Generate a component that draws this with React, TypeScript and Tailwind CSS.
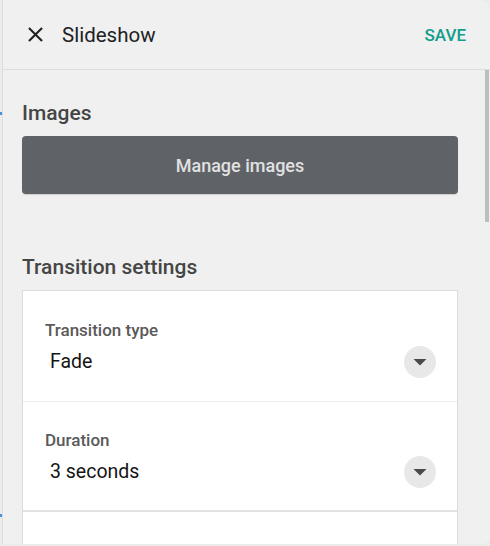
import React from "react";

function CloseIcon() {
  return (
    <svg width="25" height="25" viewBox="0 0 24 24" className="shrink-0 text-[#202124]">
      <path
        fill="currentColor"
        d="M19 6.41L17.59 5 12 10.59 6.41 5 5 6.41 10.59 12 5 17.59 6.41 19 12 13.41 17.59 19 19 17.59 13.41 12z"
      />
    </svg>
  );
}

function DropdownButton() {
  return (
    <div className="w-[32px] h-[32px] rounded-full bg-[#e8e8e8] flex items-center justify-center shrink-0">
      <svg width="14" height="8" viewBox="0 0 14 8">
        <path d="M0.5 1 L13.5 1 L7 7.5 Z" fill="#4a4a4a" />
      </svg>
    </div>
  );
}

function SelectRow({ label, value, last }: { label: string; value: string; last?: boolean }) {
  return (
    <div
      className={
        "pl-[22px] pr-[21px] " +
        (last ? "pt-[29px] pb-[22px] border-b-2 border-[#e2e2e2]" : "pt-[30px] pb-[23px] border-b border-[#ececec]")
      }
    >
      <div className="text-[17px] leading-[18px] font-medium text-[#5a5a5a]">{label}</div>
      <div className="mt-[7px] flex items-center justify-between">
        <span className="pl-[5px] text-[19.5px] leading-[24px] text-[#151515]">{value}</span>
        <DropdownButton />
      </div>
    </div>
  );
}

export default function App() {
  return (
    <div
      className="relative w-[490px] h-[546px] overflow-hidden bg-[#ececec]"
      style={{ fontFamily: "Roboto, 'Liberation Sans', sans-serif" }}
    >
      {/* little blue marks peeking in from the page behind */}
      <div className="absolute left-0 top-[112px] w-[2px] h-[3px] bg-[#4a8fe0]" />
      <div className="absolute left-0 top-[514px] w-[2px] h-[3px] bg-[#4a8fe0]" />

      <div className="ml-[2px] h-[544px] flex flex-col bg-[#f0f0f0] border-l border-[#dedede] rounded-tr-[10px] rounded-br-[8px] overflow-hidden">
        <header className="h-[70px] shrink-0 flex items-center pl-[20px] pr-[24px] border-b border-[#dcdcdc]">
          <CloseIcon />
          <h1 className="ml-[14px] text-[20.5px] leading-[24px] text-[#202124]">Slideshow</h1>
          <button className="ml-auto text-[17px] leading-[24px] font-medium text-[#129d8c]">SAVE</button>
        </header>

        <div className="flex-1 flex min-h-0">
          <main className="flex-1 pl-[19px] pr-[27px] pt-[31px] overflow-hidden">
            <section>
              <h2 className="text-[21px] leading-[24px] font-medium text-[#454545]">Images</h2>
              <button className="mt-[11px] w-full h-[58px] rounded-[4px] bg-[#5f6368] text-[18px] text-[#e1e1e1] font-medium shadow-[0_1px_1px_rgba(0,0,0,0.15)]">
                Manage images
              </button>
            </section>

            <section className="mt-[61px]">
              <h2 className="text-[21px] leading-[24px] font-medium text-[#454545]">Transition settings</h2>
              <div className="mt-[11px] bg-white border border-[#dcdcdc]">
                <SelectRow label="Transition type" value="Fade" />
                <SelectRow label="Duration" value="3 seconds" last />
                <div className="h-[60px]" />
              </div>
            </section>
          </main>

          <div className="w-[4px] mr-[1px] shrink-0">
            <div className="h-[152px] bg-[#bdbdbd]" />
          </div>
        </div>
      </div>
    </div>
  );
}
